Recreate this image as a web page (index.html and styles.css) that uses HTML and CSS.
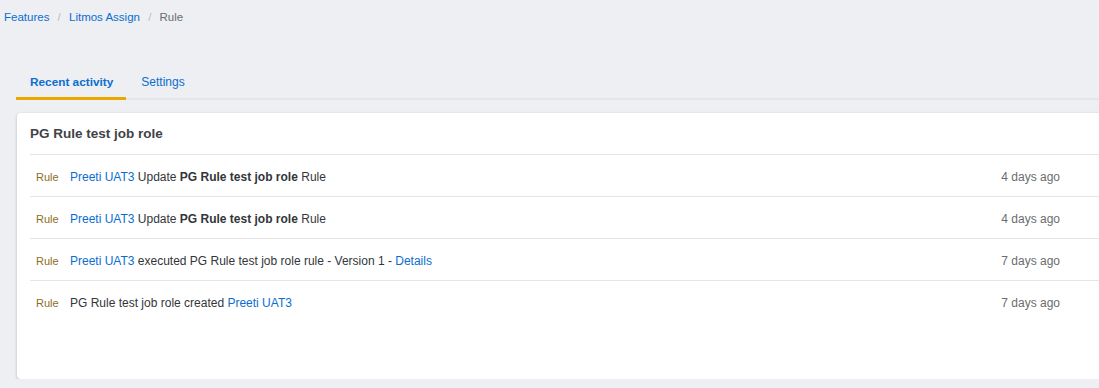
FILE: index.html
```html
<!DOCTYPE html>
<html lang="en">
  <head>
    <meta charset="UTF-8" />
    <meta name="viewport" content="width=device-width, initial-scale=1.0" />
    <title>Rule - Recent activity</title>
    <link rel="stylesheet" href="styles.css">
  </head>
  <body>
    <nav class="breadcrumb">
      <a href="#">Features</a>
      <span class="sep">/</span>
      <a href="#">Litmos Assign</a>
      <span class="sep">/</span>
      <span class="current">Rule</span>
    </nav>

    <div class="tabs">
      <a href="#" class="tab active">Recent activity</a>
      <a href="#" class="tab">Settings</a>
    </div>

    <div class="card">
      <h3 class="card-title">PG Rule test job role</h3>
      <ul class="activity">
        <li class="activity-row">
          <span class="tag">Rule</span>
          <span class="message"><a href="#">Preeti UAT3</a> Update <b>PG Rule test job role</b> Rule</span>
          <span class="time">4 days ago</span>
        </li>
        <li class="activity-row">
          <span class="tag">Rule</span>
          <span class="message"><a href="#">Preeti UAT3</a> Update <b>PG Rule test job role</b> Rule</span>
          <span class="time">4 days ago</span>
        </li>
        <li class="activity-row">
          <span class="tag">Rule</span>
          <span class="message"><a href="#">Preeti UAT3</a> executed PG Rule test job role rule - Version 1 - <a href="#">Details</a></span>
          <span class="time">7 days ago</span>
        </li>
        <li class="activity-row">
          <span class="tag">Rule</span>
          <span class="message">PG Rule test job role created <a href="#">Preeti UAT3</a></span>
          <span class="time">7 days ago</span>
        </li>
      </ul>
    </div>
  </body>
</html>
```

FILE: styles.css
```css
body {
  margin: 0;
  font-family: "Liberation Sans", Arial, sans-serif;
  font-size: 12px;
  color: #32363a;
  background-color: #edeff2;
  overflow-x: hidden;
}
a {
  color: #0a6ed1;
  text-decoration: none;
}
.breadcrumb {
  padding: 8px 4px 0;
  line-height: 18px;
  font-size: 11.5px;
}
.breadcrumb .sep {
  color: #b9bcc0;
  margin: 0 5px;
}
.breadcrumb .current {
  color: #6a6d70;
}
.tabs {
  display: flex;
  margin: 38px 0 0 16px;
  border-bottom: 2px solid #e3e5e8;
}
.tab {
  padding: 9px 13px 6px 14px;
  line-height: 18px;
  margin-bottom: -2px;
  border-bottom: 3px solid transparent;
}
.tab.active {
  font-weight: bold;
  font-size: 11.8px;
  border-bottom-color: #e9a800;
}
.tab + .tab {
  padding-left: 15px;
}
.card {
  width: 1110px;
  min-height: 266px;
  margin: 13px 0 0 17px;
  box-sizing: border-box;
  background: white;
  border-radius: 4px;
  box-shadow: 0 1px 3px rgba(0, 0, 0, 0.25);
}
.card-title {
  margin: 0;
  padding: 1px 13px 0;
  height: 41px;
  box-sizing: border-box;
  line-height: 40px;
  font-size: 13.5px;
  font-weight: bold;
  color: #3f4348;
}
.activity {
  list-style: none;
  margin: 0 0 0 13px;
  padding: 0;
}
.activity-row {
  display: flex;
  align-items: center;
  height: 42px;
  box-sizing: border-box;
  border-top: 1px solid #e5e5e5;
  padding: 2px 67px 0 6px;
}
.tag {
  width: 34px;
  font-size: 11px;
  color: #8c6d1f;
}
.message {
  flex: 1;
}
.time {
  color: #6a6d70;
}
```
